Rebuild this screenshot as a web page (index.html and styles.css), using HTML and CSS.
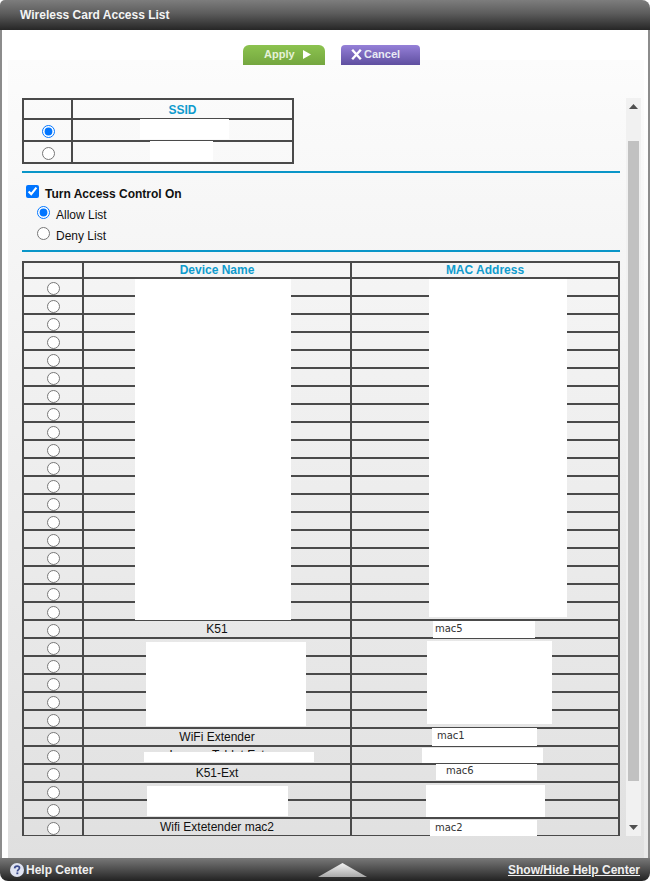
FILE: index.html
```html
<!DOCTYPE html>
<html lang="en">
<head>
<meta charset="utf-8">
<title>Wireless Card Access List</title>
<link rel="stylesheet" href="styles.css">
</head>
<body>
<div class="frame">
  <header class="top"><h1>Wireless Card Access List</h1></header>
  <main class="main">
    <div class="panel">
      <div class="actions">
        <button class="btn apply" type="button">Apply<svg width="8" height="9" viewBox="0 0 8 9"><path d="M0 0L8 4.5L0 9Z" fill="#fff"/></svg></button>
        <button class="btn cancel" type="button"><svg width="11" height="11" viewBox="0 0 11 11"><path d="M1.2 0.8L9.8 10.2M9.8 0.8L1.2 10.2" stroke="#fff" stroke-width="2.4" fill="none"/></svg>Cancel</button>
      </div>
      <div class="body">
        <div class="scroll">
          <table class="grid ssid">
            <tr><th class="c0"></th><th>SSID</th></tr>
            <tr><td><input type="radio" name="ssid" checked></td><td></td></tr>
            <tr><td><input type="radio" name="ssid"></td><td></td></tr>
          </table>
          <hr class="rule first">
          <div class="access">
            <label class="row-on"><input type="checkbox" checked><b>Turn Access Control On</b></label>
            <label class="row-radio"><input type="radio" name="acl" checked><span>Allow List</span></label>
            <label class="row-radio"><input type="radio" name="acl"><span>Deny List</span></label>
          </div>
          <hr class="rule second">
          <div class="devices">
            <table class="grid dev">
              <colgroup><col class="d0"><col class="d1"><col class="d2"></colgroup>
              <thead><tr><th></th><th>Device Name</th><th>MAC Address</th></tr></thead>
              <tbody>
                <tr><td><input type="radio" name="dev"></td><td></td><td></td></tr>
                <tr><td><input type="radio" name="dev"></td><td></td><td></td></tr>
                <tr><td><input type="radio" name="dev"></td><td></td><td></td></tr>
                <tr><td><input type="radio" name="dev"></td><td></td><td></td></tr>
                <tr><td><input type="radio" name="dev"></td><td></td><td></td></tr>
                <tr><td><input type="radio" name="dev"></td><td></td><td></td></tr>
                <tr><td><input type="radio" name="dev"></td><td></td><td></td></tr>
                <tr><td><input type="radio" name="dev"></td><td></td><td></td></tr>
                <tr><td><input type="radio" name="dev"></td><td></td><td></td></tr>
                <tr><td><input type="radio" name="dev"></td><td></td><td></td></tr>
                <tr><td><input type="radio" name="dev"></td><td></td><td></td></tr>
                <tr><td><input type="radio" name="dev"></td><td></td><td></td></tr>
                <tr><td><input type="radio" name="dev"></td><td></td><td></td></tr>
                <tr><td><input type="radio" name="dev"></td><td></td><td></td></tr>
                <tr><td><input type="radio" name="dev"></td><td></td><td></td></tr>
                <tr><td><input type="radio" name="dev"></td><td></td><td></td></tr>
                <tr><td><input type="radio" name="dev"></td><td></td><td></td></tr>
                <tr><td><input type="radio" name="dev"></td><td></td><td></td></tr>
                <tr><td><input type="radio" name="dev"></td><td></td><td></td></tr>
                <tr><td><input type="radio" name="dev"></td><td>K51</td><td></td></tr>
                <tr><td><input type="radio" name="dev"></td><td></td><td></td></tr>
                <tr><td><input type="radio" name="dev"></td><td></td><td></td></tr>
                <tr><td><input type="radio" name="dev"></td><td></td><td></td></tr>
                <tr><td><input type="radio" name="dev"></td><td></td><td></td></tr>
                <tr><td><input type="radio" name="dev"></td><td></td><td></td></tr>
                <tr><td><input type="radio" name="dev"></td><td>WiFi Extender</td><td></td></tr>
                <tr><td><input type="radio" name="dev"></td><td>Lenovo Tablet Ext</td><td></td></tr>
                <tr><td><input type="radio" name="dev"></td><td>K51-Ext</td><td></td></tr>
                <tr><td><input type="radio" name="dev"></td><td></td><td></td></tr>
                <tr><td><input type="radio" name="dev"></td><td></td><td></td></tr>
                <tr><td><input type="radio" name="dev"></td><td>Wifi Extetender mac2</td><td></td></tr>
              </tbody>
            </table>
            <i class="mask m1"></i><i class="mask m2"></i>
            <i class="mask m3"></i><i class="mask m4"></i>
            <i class="mask m5"></i><i class="mask m6"></i>
            <i class="mask m7"></i><i class="mask m8"></i>
            <span class="mask mac m9">mac5</span>
            <span class="mask mac m10">mac1</span>
            <span class="mask mac m11">mac6</span>
            <span class="mask mac m12">mac2</span>
          </div>
          <i class="mask s1"></i><i class="mask s2"></i>
        </div>
        <div class="bar">
          <svg class="arrow" width="9" height="5" viewBox="0 0 9 5"><path d="M0 5L4.5 0L9 5Z" fill="#505050"/></svg>
          <div class="track"><div class="thumb"></div></div>
          <svg class="arrow" width="9" height="5" viewBox="0 0 9 5"><path d="M0 0L4.5 5L9 0Z" fill="#505050"/></svg>
        </div>
      </div>
    </div>
  </main>
  <footer class="foot">
    <a class="help"><svg width="14" height="14" viewBox="0 0 14 14"><circle cx="7" cy="7" r="7" fill="#dfe3f2"/><path d="M4.6 5.4C4.7 3.9 5.7 3.1 7.1 3.1C8.5 3.1 9.5 3.9 9.5 5.1C9.5 6.6 7.4 6.7 7.4 8.4" stroke="#3b4a8c" stroke-width="1.7" fill="none"/><rect x="6.4" y="9.4" width="1.9" height="1.8" fill="#3b4a8c"/></svg>Help Center</a>
    <svg class="tri" width="49" height="14" viewBox="0 0 49 14"><defs><linearGradient id="tg" x1="0" y1="0" x2="0" y2="1"><stop offset="0" stop-color="#f4f4f4"/><stop offset="1" stop-color="#a8a8a8"/></linearGradient></defs><path d="M24.5 0L49 14L0 14Z" fill="url(#tg)"/></svg>
    <a class="toggle">Show/Hide Help Center</a>
  </footer>
</div>
</body>
</html>
```
FILE: styles.css
```css
* { box-sizing: border-box; }
html, body { margin: 0; padding: 0; height: 881px; overflow: hidden; background: #fff; }
body { font-family: "Liberation Sans", Arial, sans-serif; font-size: 12px; color: #111; }
.frame { width: 650px; height: 881px; display: flex; flex-direction: column; }
.top { height: 30px; flex: none; background: linear-gradient(#7d7d7d, #5c5c5c 45%, #262626); border-radius: 5px 8px 0 0; padding: 8px 0 0 20px; }
.top h1 { margin: 0; font-size: 12px; line-height: 14px; font-weight: bold; color: #f4f4f4; }
.main { flex: 1; min-height: 0; border-left: 2px solid #8c8c8c; border-right: 2px solid #8c8c8c; padding-right: 4px; display: flex; background: linear-gradient(#fff, #fff 5%, #e9e9e9); }
.panel { width: 642px; border-left: 6px solid #fff; display: flex; flex-direction: column; background: linear-gradient(#fff, #fff 30px, #fcfcfc 30px, #e0e0e0); }
.actions { height: 68px; flex: none; display: flex; gap: 16px; padding: 15px 0 0 235px; }
.btn { height: 20px; border: 0; padding: 0 0 2px; font: bold 11px "Liberation Sans", Arial, sans-serif; color: #e8eaf4; display: flex; align-items: center; }
.apply { width: 82px; background: linear-gradient(#8cc34f, #74a63f); border-radius: 6px 6px 0 0; gap: 8px; color: #e6f2d8; padding-left: 21px; }
.cancel { width: 79px; background: linear-gradient(#9580d8, #5f4fa0); border-radius: 4px 4px 0 0; gap: 2px; padding-left: 10px; }
.body { display: flex; height: 738px; margin-bottom: 22px; }
.scroll { width: 618px; overflow: hidden; padding-left: 14px; position: relative; }
.grid { border-collapse: separate; border-spacing: 0; table-layout: fixed; border: 1px solid #4a4a4a; }
.grid th, .grid td { border: 1px solid #4a4a4a; padding: 0; text-align: center; overflow: hidden; }
.grid th { color: #0f9bcd; font-weight: bold; font-size: 12px; }
.grid input { margin: 0 auto; width: 13px; height: 13px; display: block; }
.ssid { width: 272px; }
.ssid .c0 { width: 49px; }
.ssid tr { height: 22px; }
.ssid tr:first-child { height: 20px; }
.ssid th { padding-top: 1px; }
.ssid td { padding-top: 3px; }
.ssid td:first-child { padding-left: 2px; }
.rule { border: 0; height: 2px; background: #0a96c8; margin: 0; width: 598px; }
.first { margin-top: 7px; }
.access { height: 77px; padding-top: 12px; }
.access label { display: flex; align-items: flex-start; height: 14px; line-height: 14px; }
.row-on input { margin: 0 6px 0 4px; width: 13px; height: 13px; }
.row-on b { padding-top: 2px; }
.row-radio { margin-top: 7px; padding-left: 15px; }
.row-radio input { margin: 0 6px 0 0; width: 13px; height: 13px; }
.row-radio span { padding-top: 2px; }
.devices { margin-top: 9px; position: relative; width: 598px; }
.dev { width: 598px; }
.d0 { width: 60px; }
.d1 { width: 268px; }
.dev thead tr { height: 16px; }
.dev tbody tr { height: 18px; }
.dev th { line-height: 13px; }
.dev td { line-height: 14px; height: 18px; }
.dev td input { margin-top: 3px; }
.mask { position: absolute; background: #fff; display: block; }
.mac { font: 10px/12px "DejaVu Sans", sans-serif; color: #333; padding-top: 2px; }
.m1 { left: 113px; top: 18px; width: 156px; height: 341px; }
.m2 { left: 407px; top: 18px; width: 138px; height: 338px; }
.m3 { left: 124px; top: 381px; width: 160px; height: 84px; }
.m4 { left: 405px; top: 380px; width: 125px; height: 83px; }
.m5 { left: 122px; top: 491px; width: 170px; height: 10px; }
.m6 { left: 400px; top: 487px; width: 121px; height: 15px; }
.m7 { left: 125px; top: 525px; width: 141px; height: 30px; }
.m8 { left: 404px; top: 524px; width: 119px; height: 32px; }
.m9 { left: 411px; top: 360px; width: 102px; height: 17px; padding-left: 2px; }
.m10 { left: 410px; top: 467px; width: 105px; height: 18px; padding-left: 5px; }
.m11 { left: 414px; top: 503px; width: 101px; height: 16px; padding-left: 10px; padding-top: 1px; }
.m12 { left: 408px; top: 559px; width: 107px; height: 16px; padding-left: 5px; }
.s1 { left: 132px; top: 21px; width: 89px; height: 20px; }
.s2 { left: 142px; top: 43px; width: 63px; height: 20px; }
.bar { width: 15px; background: #f1f1f1; display: flex; flex-direction: column; align-items: center; }
.arrow { flex: none; margin: 6px 0; }
.track { flex: 1; width: 100%; padding: 26px 2px 0; }
.thumb { height: 640px; background: #c1c1c1; }
.foot { height: 23px; flex: none; background: linear-gradient(#787878, #525252 45%, #222); border-radius: 0 0 8px 8px; display: flex; align-items: center; padding: 0 10px 0 10px; color: #f0f0f0; font-weight: bold; position: relative; }
.help { display: flex; align-items: center; gap: 2px; }
.tri { position: absolute; left: 318px; bottom: 4px; }
.toggle { margin-left: auto; text-decoration: underline; }
```
